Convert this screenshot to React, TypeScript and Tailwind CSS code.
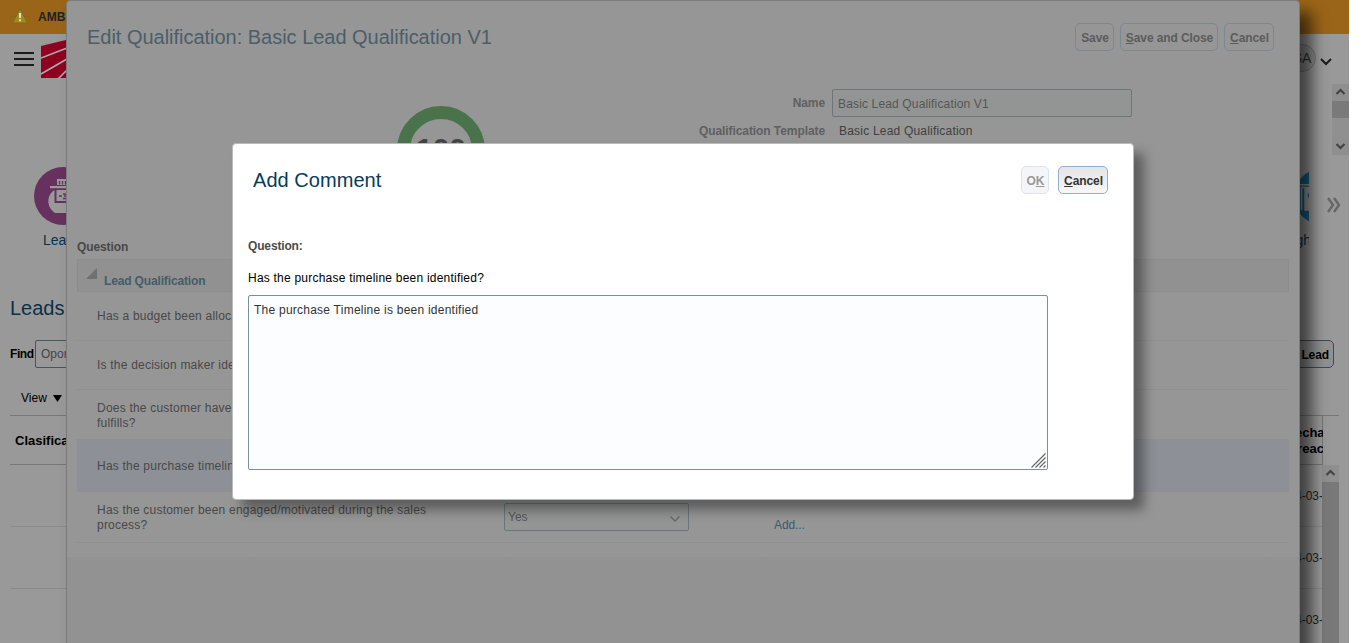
import type { ReactNode } from "react";

function Btn({ children, className = "" }: { children: ReactNode; className?: string }) {
  return (
    <button className={`flex h-7 items-center justify-center rounded-[5px] border pt-0.5 pl-px text-[12px] font-bold leading-none tracking-[-0.1px] whitespace-nowrap ${className}`}>
      {children}
    </button>
  );
}

function Arrow({ up = false }: { up?: boolean }) {
  return (
    <svg width="17" height="17" viewBox="0 0 17 17" fill="none" stroke="#444" strokeWidth="2.2" className="block shrink-0 bg-[#8f8f8f]">
      <path d={up ? "M4.5 10 8.5 6 12.5 10" : "M4.5 6 8.5 10 12.5 6"} />
    </svg>
  );
}

function PageLayer() {
  return (
    <div className="flex h-[643px] w-[1349px] flex-col overflow-hidden bg-[#999]">
      <div className="flex h-[34px] shrink-0 items-center bg-[#9a6518] pl-3">
        <svg width="16" height="16" viewBox="0 0 16 16" className="mb-[3px] shrink-0">
          <path d="M8 .8 15.500 15H.5Z" fill="#a38a14" stroke="#7a6a20" strokeLinejoin="round" />
          <path d="M8 5v5M8 11.3v2" stroke="#ddd" strokeWidth="2" />
        </svg>
        <span className="ml-[10px] text-[12px] font-bold text-[#222]">AMBIENTE</span>
      </div>

      <div className="flex h-[50px] shrink-0 justify-between">
        <div className="flex">
          <svg width="20" height="14" className="mt-[18px] ml-[14px]" stroke="#1c1c1c" strokeWidth="2">
            <path d="M0 1H20M0 7H20M0 13H20" />
          </svg>
          <svg width="40" height="40" viewBox="0 0 40 40" className="mt-[5px] ml-[7px]">
            <path d="M0 7 25 1H40V39H0Z" fill="#8f0020" />
            <path d="M0 19 26 9M0 35 26 20M17 40 27 30" stroke="#aaa" strokeWidth="1.6" />
          </svg>
        </div>
        <div className="mr-[17px] flex">
          <div className="mt-[10px] flex h-7 w-7 items-center justify-center rounded-full border border-[#777] bg-[#8e8e8e] text-[14px] text-[#333]">SA</div>
          <svg width="12" height="8" viewBox="0 0 12 8" className="mt-6 ml-1" fill="none" stroke="#1c1c1c" strokeWidth="2">
            <path d="M1 1 6 6 11 1" />
          </svg>
        </div>
      </div>

      <div className="flex h-[71px] shrink-0 justify-end">
        <div className="flex w-[17px] flex-col bg-[#909090]">
          <Arrow up />
          <div className="h-[17px] bg-[#7a7a7a]" />
          <div className="mt-auto"><Arrow /></div>
        </div>
      </div>

      <div className="flex h-[131px] shrink-0 justify-between">
        <div className="pt-3 pl-[34px]">
          <svg width="58" height="58" viewBox="0 0 58 58">
            <circle cx="29" cy="29" r="29" fill="#66305f" />
            <path d="M23 12h20v6H23zM16 19h28v2.300H16zM21 23h26v23H21C13 41 12 30 19 24z" fill="#999" />
            <path d="M21.500 21.500V35H42" fill="none" stroke="#66305f" strokeWidth="2" />
            <path d="M25 29h3M29 27h4v4.500h-4M30 29h3M25.500 14v3.500M28.500 14v3.500M31.500 14v3.500" fill="none" stroke="#66305f" strokeWidth="1.3" />
          </svg>
          <div className="mt-[5px] ml-[9px] text-[14px] text-[#0b3048]">Leads</div>
        </div>
        <div className="flex pt-3">
          <div className="w-[58px] overflow-hidden">
            <svg width="58" height="58" viewBox="0 0 58 58">
              <circle cx="71" cy="29.5" r="28" fill="#185f80" />
              <path d="M44 17.800H58M50.500 43V20.500H58M54 21V43H58" fill="none" stroke="#999" strokeWidth="1.6" />
              <path d="M54 21H58V43H54Z" fill="#999" />
              <path d="M58 26a3 3 0 0 0 0 5Z" fill="#185f80" />
            </svg>
            <div className="mt-[5px] -mr-[2px] text-right text-[14px] text-[#0b3048]">Insigh</div>
          </div>
          <svg width="14" height="16" viewBox="0 0 14 16" className="mt-[30px] mr-[8px] ml-[18px]" fill="none" stroke="#666" strokeWidth="2.4">
            <path d="M1 1 6 8 1 15M7 1 12 8 7 15" />
          </svg>
        </div>
      </div>

      <div className="flex h-[54px] shrink-0 items-start pt-[9px] pl-[10px] text-[20px] leading-[26px] text-[#0b3048]">Leads</div>

      <div className="flex h-7 shrink-0 items-center justify-between pr-[15px] pl-[10px] text-[12px]">
        <div className="flex items-center">
          <b className="w-[25px] tracking-[-0.4px]">Find</b>
          <div className="flex h-7 w-[140px] items-center rounded-[2px] border border-[#45565c] pl-[5px] text-[#444]">Oportunidad</div>
        </div>
        <Btn className="border-[#3d4c5c] bg-[#919191] px-[4px] text-black">Create Lead</Btn>
      </div>

      <div className="flex h-[47px] shrink-0 items-center gap-[6px] pt-[14px] pl-[21px] text-[12px] text-black">
        <span className="mb-px">View</span>
        <svg width="9" height="7"><path d="M0 0H9L4.500 7Z" fill="#000" /></svg>
      </div>

      <div className="flex grow justify-between pl-[10px] pr-[10px]">
        <div className="w-[300px] border-t border-[#777]">
          <div className="flex h-[49px] items-center border-b border-[#777] pt-[2px] pl-[5px] text-[13px] font-bold text-black">Clasificación</div>
          <div className="h-[62px] border-b border-[#8a8a8a]" />
          <div className="h-[62px] border-b border-[#8a8a8a]" />
        </div>
        <div className="flex border-t border-[#777]">
          <div className="w-[38px] overflow-hidden">
            <div className="flex h-[49px] flex-col items-start justify-center border-r border-b border-[#777] pt-[2px] pl-[2px] text-[13px] leading-4 font-bold text-black">
              <span>Fecha</span>
              <span className="pl-[3px]">creación</span>
            </div>
            {[0, 1, 2].map((n) => (
              <div key={n} className="flex h-[62px] items-center justify-end border-b border-[#8a8a8a] text-[12px] text-[#222]">24-03-</div>
            ))}
          </div>
          <div className="-ml-px flex w-[17px] flex-col pt-[49px]">
            <Arrow up />
            <div className="grow bg-[#797979]" />
          </div>
        </div>
      </div>
    </div>
  );
}

const rows = [
  { lines: ["Has a budget been allocated?"], css: "h-[49px]" },
  { lines: ["Is the decision maker identified?"], css: "h-[49px]" },
  { lines: ["Does the customer have a need that the product", "fulfills?"], css: "h-[50px] pt-[2px]" },
  { lines: ["Has the purchase timeline been identified?"], css: "h-[52px] bg-[#8d9197] pt-[2px]" },
];

function EditDialog() {
  return (
    <div className="absolute top-0 left-[66px] flex h-[680px] w-[1234px] flex-col rounded-t-[4px] border border-[#7b7b7b] bg-[#959595] bg-linear-to-b from-[#969696] from-[556px] to-[#929292] to-[556px] px-[10px] shadow-[12px_12px_16px_0px_rgba(0,0,0,0.6)]">
      <header className="flex h-[88px] shrink-0 justify-between pr-[15px] pl-[10px]">
        <h1 className="pt-[22px] text-[20px] leading-[28px] tracking-[-0.02px] text-[#4b5e69]">Edit Qualification: Basic Lead Qualification V1</h1>
        <div className="flex gap-[6px] pt-[22px] text-[#5c5c5c]">
          <Btn className="w-[39px] border-[#7d8791]">Save</Btn>
          <Btn className="w-[98px] border-[#7d8791]"><u>S</u>ave and Close</Btn>
          <Btn className="w-[50px] border-[#7d8791]"><u>C</u>ancel</Btn>
        </div>
      </header>
      <section className="flex h-[150px] shrink-0 text-[12px] tracking-[0.15px]">
        <div className="w-[555px] pt-[17px] pl-[320px]">
          <div className="flex h-[88px] w-[88px] items-center justify-center rounded-full border-[13px] border-[#4a734b] pb-[3px] text-[30px] font-bold tracking-normal text-[#444]">100</div>
        </div>
        <div className="grid h-14 grid-cols-[193px_300px] grid-rows-[28px_28px] items-center gap-x-[7px]">
          <b className="text-right tracking-[-0.08px] text-[#606060]">Name</b>
          <div className="flex h-7 items-center rounded-[2px] border border-[#6b7679] bg-[#929593] pt-px pl-[5px] text-[#555]">Basic Lead Qualification V1</div>
          <b className="text-right tracking-[-0.08px] text-[#606060]">Qualification Template</b>
          <span className="pl-[7px] tracking-[0.2px] text-[#404040]">Basic Lead Qualification</span>
        </div>
      </section>
      <section className="flex w-[1212px] flex-col text-[12px] tracking-[0.21px] text-[#484848]">
        <b className="h-5 pt-px leading-[15px] tracking-[-0.1px]">Question</b>
        <div className="flex h-[33px] items-center border border-[#8d8d8d] bg-[#919191] pl-[8px]">
          <svg width="11" height="11" className="mb-1"><path d="M11 0V11H0Z" fill="#6e7173" /></svg>
          <b className="mt-[10px] ml-[7px] tracking-[-0.15px] text-[#455c6a]">Lead Qualification</b>
        </div>
        {rows.map((r) => (
          <div key={r.lines[0]} className={`flex flex-col justify-center border-b border-[#8f8f8f] pl-5 leading-[15px] whitespace-nowrap ${r.css}`}>
            {r.lines.map((l) => <span key={l}>{l}</span>)}
          </div>
        ))}
        <div className="grid h-[51px] grid-cols-[407px_185px_auto] border-b border-[#8f8f8f] pl-5">
          <p className="pt-[11px] leading-[15px]">Has the customer been engaged/motivated during the sales<br />process?</p>
          <div className="mt-[11px] flex h-7 items-center justify-between rounded-[2px] border border-[#6b7679] bg-[#929593] pr-[8px] pl-[3px] tracking-normal text-[#555]">
            Yes
            <svg width="10" height="6" fill="none" stroke="#666" strokeWidth="1.3" className="mt-1"><path d="M.5.5 5 5 9.500.5" /></svg>
          </div>
          <span className="pt-[24px] pl-[85px] tracking-[-0.1px] text-[#375b73]">Add...</span>
        </div>
      </section>
    </div>
  );
}

function CommentDialog() {
  return (
    <div className="absolute top-[143px] left-[232px] h-[357px] w-[902px] rounded-[4px] border border-[#bbb] bg-white px-[15px] text-[12px] tracking-[0.22px] shadow-[10px_10px_12px_0px_rgba(0,0,0,0.38)]">
      <header className="flex justify-between pt-[22px] pr-[10px] pl-[5px]">
        <h2 className="text-[20px] leading-[28px] tracking-[0.05px] text-[#063c59]">Add Comment</h2>
        <div className="flex gap-[9px]">
          <Btn className="w-7 rounded-[2px] border-[#dfe4eb] bg-[#f4f5f7] text-[#999]">O<u>K</u></Btn>
          <Btn className="w-[50px] border-[#8fb0d0] bg-linear-to-b from-[#e4e4e4] to-[#f7f7f7] text-[#333]"><u>C</u>ancel</Btn>
        </div>
      </header>
      <b className="mt-[44px] block leading-4 tracking-[-0.15px] text-[#4c4c4c]">Question:</b>
      <p className="mt-4 leading-4 text-black">Has the purchase timeline been identified?</p>
      <div className="relative mt-[9px] h-[175px] w-[800px]">
        <textarea
          className="block h-full w-full resize-none rounded-[2px] border border-[#7b9199] bg-[#fcfdff] px-[5px] py-[7px] leading-[14px] tracking-[0.24px] text-[#333] outline-none"
          defaultValue="The purchase Timeline is been identified"
        />
        <svg width="15" height="15" viewBox="0 0 15 15" stroke="#666" strokeWidth="1.2" className="absolute right-[2px] bottom-[2px]">
          <path d="M.5 14.500 14.500.5M4.500 14.500 14.500 4.500M8.500 14.500 14.500 8.500M12.500 14.500 14.500 12.500" />
        </svg>
      </div>
    </div>
  );
}

export default function App() {
  return (
    <main className="relative h-[643px] w-[1366px] overflow-hidden bg-white font-['Liberation_Sans',Arial,sans-serif]">
      <PageLayer />
      <EditDialog />
      <CommentDialog />
    </main>
  );
}
